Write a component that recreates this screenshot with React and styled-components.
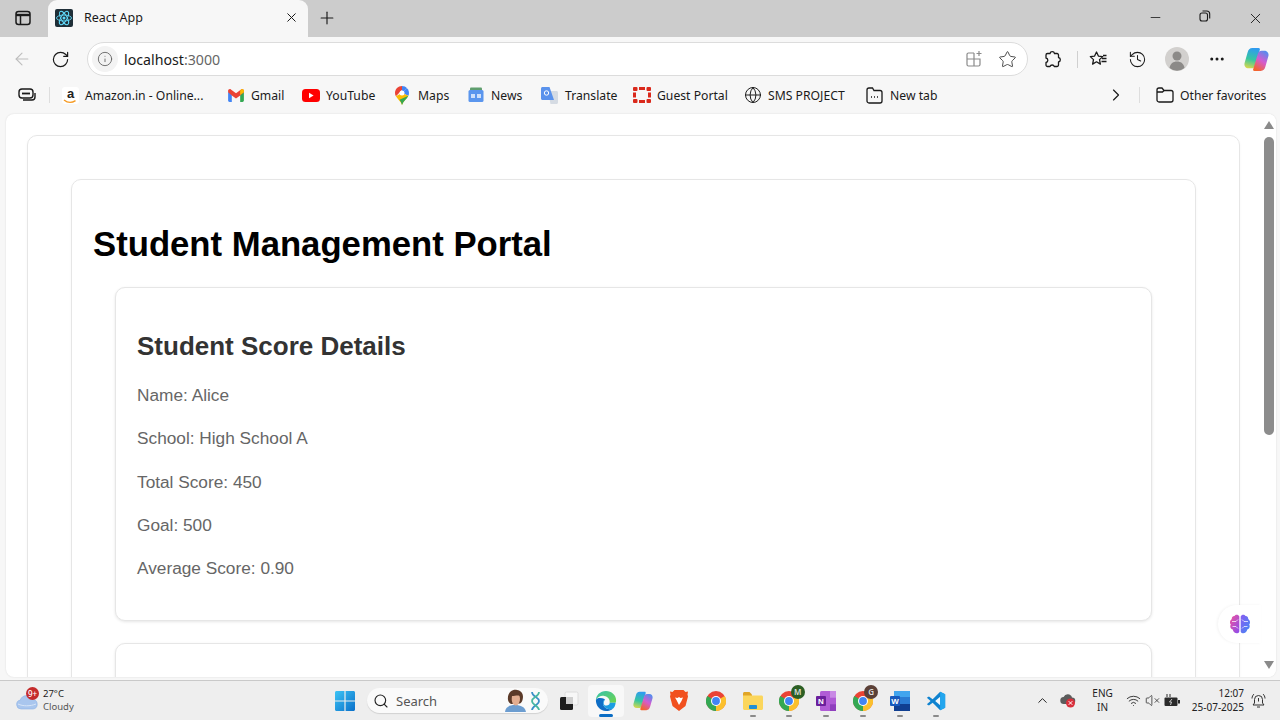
import React from "react"
import styled, { createGlobalStyle } from "styled-components"
import {
  ArrowLeft, RotateCw, Info, X, Plus, Minus, Star, History, MoreHorizontal,
  ChevronRight, ChevronUp, Search, Wifi, VolumeX, Globe,
} from "lucide-react"

const UI_FONT = `"Noto Sans", "Open Sans", sans-serif`

const GlobalStyle = createGlobalStyle`
  html, body { margin: 0; padding: 0; height: 720px; overflow: hidden; background: #f7f7f7; }
  * { box-sizing: border-box; }
`

/* ---------- drawn icons ---------- */

const ReactFav = () => (
  <svg width="18" height="18" viewBox="0 0 18 18">
    <rect width="18" height="18" rx="2" fill="#1f2f38" />
    <g fill="none" stroke="#61dafb" strokeWidth="0.9">
      <ellipse cx="9" cy="9" rx="7.5" ry="3" />
      <ellipse cx="9" cy="9" rx="7.5" ry="3" transform="rotate(60 9 9)" />
      <ellipse cx="9" cy="9" rx="7.5" ry="3" transform="rotate(120 9 9)" />
    </g>
    <circle cx="9" cy="9" r="1.5" fill="#61dafb" />
  </svg>
)

const SidebarIcon = () => (
  <svg width="16" height="16" viewBox="0 0 16 16" fill="none" stroke="#1a1a1a" strokeWidth="1.5">
    <rect x="1" y="1.5" width="14" height="13" rx="2.5" />
    <path d="M1 5h14" strokeWidth="2.4" />
    <path d="M5.5 5v9" />
  </svg>
)

const RestoreIcon = () => (
  <svg width="12" height="12" viewBox="0 0 12 12" fill="none" stroke="#1a1a1a" strokeWidth="1.1">
    <rect x="1" y="3" width="7.5" height="8" rx="2" />
    <path d="M3.5 1h4.2A3 3 0 0 1 10.7 4v4.5" />
  </svg>
)

const SplitIcon = () => (
  <svg width="18" height="18" viewBox="0 0 18 18" fill="none" stroke="#8a8a8a" strokeWidth="1.2">
    <path d="M9 3H3.5A1.5 1.5 0 0 0 2 4.5v10A1.5 1.5 0 0 0 3.5 16h10a1.5 1.5 0 0 0 1.5-1.5V9H2M9 3v13" />
    <path d="M14 1v5M11.5 3.5h5" />
  </svg>
)

const ExtensionIcon = () => (
  <svg width="19" height="19" viewBox="0 0 19 19" fill="none" stroke="#1a1a1a" strokeWidth="1.3" strokeLinejoin="round">
    <path d="M7 3.5a2.3 2.3 0 0 1 4.5 0H14A1.5 1.5 0 0 1 15.5 5v2.5a2.3 2.3 0 0 1 0 4.5V15a1.5 1.5 0 0 1-1.5 1.5h-2.700a2.300 2.300 0 0 0-4.300 0H4.500A1.500 1.500 0 0 1 3 15v-2.500a2.300 2.300 0 0 0 0-4.500V5a1.500 1.500 0 0 1 1.500-1.500z" />
  </svg>
)

const FavListIcon = () => (
  <svg width="20" height="20" viewBox="0 0 20 20" fill="none" stroke="#1a1a1a" strokeWidth="1.3" strokeLinejoin="round">
    <path d="M8.5 3l1.9 4.1 4.3.5-3.2 3 .9 4.500-3.900-2.300-3.900 2.300.9-4.500-3.200-3 4.300-.5z" />
    <path d="M14 9.500h4.500M13.500 12.500h5M15 6.500h3.500" />
  </svg>
)

const Avatar = () => (
  <svg width="24" height="24" viewBox="0 0 24 24">
    <circle cx="12" cy="12" r="12" fill="#d2d0ce" />
    <circle cx="12" cy="9" r="4.5" fill="#8c8a88" />
    <path d="M4.500 21c.8-4.500 3.700-6.500 7.500-6.500s6.700 2 7.500 6.500A12 12 0 0 1 4.500 21z" fill="#8c8a88" />
  </svg>
)

const CopilotIcon = ({ id, size }) => (
  <svg width={size} height={size} viewBox="0 0 24 24">
    <defs>
      <linearGradient id={`${id}a`} x1="0.5" y1="0" x2="0.3" y2="1">
        <stop offset="0" stopColor="#2f9bf0" />
        <stop offset="0.55" stopColor="#35c7a0" />
        <stop offset="1" stopColor="#d8d84c" />
      </linearGradient>
      <linearGradient id={`${id}b`} x1="0.8" y1="0" x2="0.3" y2="1">
        <stop offset="0" stopColor="#4c8ff0" />
        <stop offset="0.5" stopColor="#d45bd0" />
        <stop offset="1" stopColor="#f3642c" />
      </linearGradient>
    </defs>
    <path d="M8 1h6c1 0 1.500.8 1.200 1.700L10.500 18c-.5 1.500-1.500 2.500-3.300 2.500H4.500c-3 0-4.500-2.500-4-5L3.500 5C4.100 2.600 5.500 1 8 1z" fill={`url(#${id}a)`} />
    <path d="M16 23h-6c-1 0-1.500-.8-1.200-1.700L13.500 6c.5-1.500 1.500-2.500 3.300-2.500h2.700c3 0 4.500 2.500 4 5L20.500 19c-.6 2.400-2 4-4.500 4z" fill={`url(#${id}b)`} />
  </svg>
)

const AmazonIcon = () => (
  <AmazonBox>
    <span>a</span>
    <svg width="14" height="5" viewBox="0 0 14 5" fill="none" stroke="#f59a23" strokeWidth="1.4">
      <path d="M1 1c3.500 2.800 8 2.800 11.500.6" />
    </svg>
  </AmazonBox>
)

const GmailIcon = () => (
  <svg width="16" height="13" viewBox="0 0 17 14">
    <path d="M0 3v9.500c0 .8.700 1.500 1.500 1.500H4V6z" fill="#4285f4" />
    <path d="M17 3v9.500c0 .8-.7 1.500-1.500 1.500H13V6z" fill="#34a853" />
    <path d="M4 7L0 3.500V2C0 .3 2-.5 3 .5l5.500 4.200L14 .5c1-1 3-.2 3 1.500v1.500L13 7 8.500 10.300z" fill="#ea4335" />
    <path d="M13 1.500l1-1c1-1 3-.2 3 1.500v1.500L13 6.500z" fill="#fbbc04" />
  </svg>
)

const YoutubeIcon = () => (
  <svg width="18" height="13" viewBox="0 0 18 13">
    <rect width="18" height="13" rx="3.5" fill="#f00" />
    <path d="M7 3.800v5.400l4.600-2.700z" fill="#fff" />
  </svg>
)

const MapsIcon = () => (
  <svg width="14" height="19" viewBox="0 0 14 19">
    <path d="M7 0C3 0 0 3 0 7c0 1.300.3 2.300.9 3.300L7 4z" fill="#ea4335" />
    <path d="M7 0c2 0 3.800.8 5 2.200L7 7z" fill="#4285f4" />
    <path d="M12 2.200C13.300 3.400 14 5.100 14 7c0 1-.2 1.900-.6 2.700L7 7z" fill="#4285f4" />
    <path d="M.9 10.300L7 7l6.400 2.700C12 12.800 8.300 15 7 19c-1-3.500-4.500-5.800-6.100-8.700z" fill="#fbbc04" />
    <path d="M4.500 13.800L13.400 9.700C12 12.800 8.300 15 7 19c-.5-2-1.300-3.600-2.500-5.200z" fill="#34a853" />
    <circle cx="7" cy="7" r="2.5" fill="#fff" />
  </svg>
)

const NewsIcon = () => (
  <svg width="16" height="16" viewBox="0 0 16 16">
    <rect x="2" y="0.5" width="12" height="5" rx="1" fill="#5f9e6e" />
    <rect x="0.5" y="3" width="15" height="12" rx="1.5" fill="#5b96ee" />
    <rect x="3" y="7" width="4" height="4" fill="#cfe0fa" />
    <rect x="9" y="7" width="4" height="4" fill="#cfe0fa" />
  </svg>
)

const TranslateIcon = () => (
  <svg width="17" height="17" viewBox="0 0 17 17">
    <path d="M7 4h8.500c.8 0 1.500.7 1.500 1.500v10c0 .8-.7 1.500-1.500 1.500H9.500z" fill="#d5dbe3" />
    <path d="M1.500 0h7L13 13H1.500C.7 13 0 12.300 0 11.500v-10C0 .7.700 0 1.500 0z" fill="#5a92ec" />
    <circle cx="5.5" cy="6" r="2.2" fill="none" stroke="#fff" strokeWidth="1" />
  </svg>
)

const PortalIcon = () => (
  <svg width="18" height="16" viewBox="0 0 18 16" fill="#da291c">
    <rect x="0" y="0" width="4.5" height="4" rx="1" />
    <rect x="6" y="0" width="6" height="3" />
    <rect x="13.5" y="0" width="4.5" height="4" rx="1" />
    <rect x="0" y="5.5" width="3" height="5" />
    <rect x="15" y="5.5" width="3" height="5" />
    <rect x="0" y="12" width="4.5" height="4" rx="1" />
    <rect x="6" y="13" width="6" height="3" />
    <rect x="13.5" y="12" width="4.5" height="4" rx="1" />
  </svg>
)

const TabPageIcon = () => (
  <svg width="17" height="17" viewBox="0 0 17 17" fill="none" stroke="#1a1a1a" strokeWidth="1.3">
    <path d="M3 1h3.500l1.500 2.500h6a2 2 0 0 1 2 2V14a2 2 0 0 1-2 2H3a2 2 0 0 1-2-2V3a2 2 0 0 1 2-2z" />
    <path d="M5 10h1M8 10h1M11 10h1" strokeWidth="1.6" />
  </svg>
)

const FolderIcon = () => (
  <svg width="18" height="16" viewBox="0 0 18 16" fill="none" stroke="#1a1a1a" strokeWidth="1.3">
    <path d="M1 3a2 2 0 0 1 2-2h3l2 2.500h7a2 2 0 0 1 2 2V13a2 2 0 0 1-2 2H3a2 2 0 0 1-2-2z" />
    <path d="M1 5h5.500L8 3.500" />
  </svg>
)

const BrainIcon = () => (
  <svg width="22" height="20" viewBox="0 0 22 20">
    <defs>
      <linearGradient id="brainLeft" x1="0" y1="0" x2="1" y2="1">
        <stop offset="0" stopColor="#f2559a" />
        <stop offset="1" stopColor="#8a4cf0" />
      </linearGradient>
      <linearGradient id="brainRight" x1="0" y1="0" x2="1" y2="1">
        <stop offset="0" stopColor="#8a5cf0" />
        <stop offset="1" stopColor="#3f8bf5" />
      </linearGradient>
    </defs>
    <path d="M10.300 2.500C9.500.5 6.500.3 5.500 2 3.500 2 2.500 3.500 2.800 5 .8 6.200.3 9 1.800 10.500.6 12.500 1.500 15 3.800 15.500 4 18 7 20 9 19c1-.4 1.300-1 1.300-2z" fill="url(#brainLeft)" />
    <path d="M11.700 2.500C12.500.5 15.500.3 16.500 2c2 0 3 1.500 2.700 3 2 1.200 2.500 4 1 5.500 1.200 2 .3 4.500-2 5C18 18 15 20 13 19c-1-.4-1.300-1-1.300-2z" fill="url(#brainRight)" />
    <path d="M3 7.500h4l2-2M3.500 12.500H7l2 2M19 7.500h-4l-2-2M18.500 12.500H15l-2 2" fill="none" stroke="#fff" strokeWidth="0.9" opacity="0.8" />
  </svg>
)

const WeatherIcon = () => (
  <svg width="22" height="18" viewBox="0 0 22 18">
    <path d="M5 17a4.500 4.500 0 0 1-.8-8.900A7 7 0 0 1 17 7.500a4.800 4.800 0 0 1 .2 9.500z" fill="#a9c6ee" stroke="#8fb3e6" strokeWidth="0.6" />
    <path d="M2 12c5 2.400 12 2.400 18 0" fill="none" stroke="#d7e5f8" strokeWidth="1" />
  </svg>
)

const WindowsLogo = () => (
  <svg width="20" height="20" viewBox="0 0 20 20">
    <defs>
      <linearGradient id="winGrad" x1="0" y1="0" x2="1" y2="1">
        <stop offset="0" stopColor="#3cc4f5" />
        <stop offset="1" stopColor="#0a6fc9" />
      </linearGradient>
    </defs>
    <path d="M0 1.500C0 .7.700 0 1.500 0h7.900v9.400H0zM10.600 0h7.900c.8 0 1.500.7 1.500 1.500v7.900h-9.400zM0 10.600h9.400V20H1.500C.7 20 0 19.300 0 18.500zM10.600 10.600H20v7.900c0 .8-.7 1.500-1.500 1.500h-7.900z" fill="url(#winGrad)" />
  </svg>
)

const SearchFace = () => (
  <svg width="23" height="23" viewBox="0 0 23 23">
    <path d="M1 23c.5-5 4-7 10-7s10 2 11 7z" fill="#6c9dd0" />
    <path d="M4 11C3 4 8 0 13 1c5 .5 7 5 5.500 10-.5 2-1.500 3-2.500 3.500L7 15c-1.500-1-2.500-2-3-4z" fill="#5b3a29" />
    <path d="M8 7c3 0 6-1 7.500 0 1 3 .5 6-1.500 8.500-1.500 1.500-4 1-5-.5C7.500 12.500 7.500 10 8 7z" fill="#e2ad90" />
  </svg>
)

const DnaIcon = () => (
  <svg width="11" height="20" viewBox="0 0 11 20" fill="none" strokeWidth="1.7">
    <path d="M2 1c0 5 7 5 7 9s-7 5-7 9" stroke="#3a8fc8" />
    <path d="M9 1c0 5-7 5-7 9s7 5 7 9" stroke="#49b7a0" />
  </svg>
)

const TaskViewIcon = () => (
  <svg width="20" height="20" viewBox="0 0 20 20">
    <rect x="6" y="1" width="13" height="13" rx="1.5" fill="#f7f7f7" stroke="#dcdcdc" />
    <rect x="1" y="6" width="13" height="13" rx="1.5" fill="#1e1e1e" />
    <rect x="7" y="6" width="7" height="7" fill="#cfcfcf" />
  </svg>
)

const EdgeIcon = () => (
  <svg width="22" height="22" viewBox="0 0 24 24">
    <defs>
      <linearGradient id="edgeTop" x1="0" y1="0" x2="1" y2="1">
        <stop offset="0" stopColor="#35c1b0" />
        <stop offset="1" stopColor="#6fd54a" />
      </linearGradient>
    </defs>
    <path d="M12 1C5.500 1 1 6 1 11c2-4 6-5 9-4.500 4 .7 6.500 3.500 6 7.500h6.500c.5-1 .5-2 .5-3C23 5.500 18 1 12 1z" fill="url(#edgeTop)" />
    <path d="M1 11c-.3 6 4.500 12 11 12 3 0 5.500-1 7.500-2.500-3.500 1-7.500.5-9.500-2.500-2-3-1-6.500 1-8-4-1.500-8.500-2-10 1z" fill="#0f6ec6" />
    <path d="M11 10c-2.500 1.500-3 5-1 8 2 3 6 3.500 9.500 2.500 1.500-1.500 2.700-3 3-6.500H16c.2 2-1.500 3-3.500 3-2.500 0-3.500-2-3-3.500.3-1.300 1-2.500 1.500-3.500z" fill="#1b9de2" />
  </svg>
)

const BraveIcon = () => (
  <svg width="18" height="21" viewBox="0 0 18 21">
    <path d="M4.500 0h9l2 2 2.500-.5-.5 3L18 6.500 15.500 16 9 21 2.500 16 0 6.500l.5-2L0 1.500 2.500 2z" fill="#f1501f" />
    <path d="M5 7.500l2.500.5L9 7l1.500 1 2.500-.5-1.500 3.500L9 15l-2.500-5z" fill="#fff" />
  </svg>
)

const ChromeIcon = () => (
  <svg width="20" height="20" viewBox="0 0 24 24">
    <circle cx="12" cy="12" r="12" fill="#ea4335" />
    <path d="M12 12L22.400 6A12 12 0 0 1 12 24z" fill="#fbc02d" />
    <path d="M12 12L12 24A12 12 0 0 1 1.600 6z" fill="#34a853" />
    <circle cx="12" cy="12" r="6" fill="#fff" />
    <circle cx="12" cy="12" r="4.7" fill="#4285f4" />
  </svg>
)

const FilesIcon = () => (
  <svg width="20" height="18" viewBox="0 0 20 18">
    <path d="M0 1.500C0 .7.700 0 1.500 0h5L9 2.500V5H0z" fill="#e0a526" />
    <path d="M0 3.500h18.500c.8 0 1.500.7 1.500 1.500v11.500c0 .8-.7 1.500-1.500 1.500h-17C.7 18 0 17.300 0 16.500z" fill="#fbd65c" />
    <rect x="6" y="13" width="8" height="4" rx="0.8" fill="#1f8fd6" />
  </svg>
)

const OneNoteIcon = () => (
  <svg width="20" height="20" viewBox="0 0 20 20">
    <rect x="4" y="0" width="16" height="20" rx="1.5" fill="#b05cd6" />
    <rect x="14" y="0" width="6" height="6.7" fill="#c98ae5" />
    <rect x="14" y="13.3" width="6" height="6.7" fill="#8f3fbd" />
    <rect x="0" y="5" width="10" height="10" rx="1" fill="#6b1f9c" />
    <Letter x="5" y="13" fontSize="8">N</Letter>
  </svg>
)

const WordIcon = () => (
  <svg width="20" height="20" viewBox="0 0 20 20">
    <rect x="4" y="0" width="16" height="6" fill="#41a5ee" />
    <rect x="4" y="6" width="16" height="7" fill="#2b7cd3" />
    <rect x="4" y="13" width="16" height="7" fill="#103f91" />
    <rect x="0" y="5" width="10" height="10" rx="1" fill="#185abd" />
    <Letter x="5" y="13" fontSize="8">W</Letter>
  </svg>
)

const VsCodeIcon = () => (
  <svg width="20" height="20" viewBox="0 0 24 24">
    <path d="M17 1L8 10 3.500 6.500 1 8l4.500 4L1 16l2.500 1.500L8 14l9 9 6-3V4z" fill="#0f83d0" />
    <path d="M17 7l-6 5 6 5z" fill="#fff" opacity="0.95" />
    <path d="M17 1l6 3v16l-6 3z" fill="#23a6ee" />
  </svg>
)

const TrayCloud = () => (
  <svg width="16" height="15" viewBox="0 0 16 15">
    <path d="M4 11a3.500 3.500 0 0 1-.4-7A4.500 4.500 0 0 1 12 4.500 3 3 0 0 1 12 11z" fill="#5c5c5c" />
    <circle cx="10.5" cy="10" r="4.5" fill="#d9303c" />
    <path d="M8.700 8.200l3.600 3.600M12.300 8.200l-3.600 3.600" stroke="#fff" strokeWidth="1" />
  </svg>
)

const BatteryIcon = () => (
  <svg width="16" height="14" viewBox="0 0 16 14">
    <rect x="0.5" y="3.5" width="13" height="8.5" rx="1" fill="#2a2a2a" />
    <rect x="14" y="6" width="2" height="3.5" fill="#2a2a2a" />
    <path d="M3 0v3M6 0v3" stroke="#2a2a2a" strokeWidth="1" />
    <path d="M8 5L5.500 8h2L6.500 11" stroke="#eee" strokeWidth="0.8" fill="none" />
  </svg>
)

const BellIcon = () => (
  <svg width="15" height="16" viewBox="0 0 15 16" fill="none" stroke="#333" strokeWidth="1">
    <path d="M7.500 2.500a4 4 0 0 1 4 4V10l1.500 2H2l1.500-2V6.500a4 4 0 0 1 4-4zM6 14h3" />
    <path d="M1 5.500C1 3.500 2 2 3 1M14 5.500c0-2-1-3.500-2-4.500" />
    <path d="M7.500 5v3.500" />
  </svg>
)

/* ---------- data ---------- */

const bookmarks = [
  { label: "Amazon.in - Online...", icon: <AmazonIcon />, width: 166, gap: 6 },
  { label: "Gmail", icon: <GmailIcon />, width: 74, gap: 7 },
  { label: "YouTube", icon: <YoutubeIcon />, width: 93, gap: 6 },
  { label: "Maps", icon: <MapsIcon />, width: 73, gap: 9 },
  { label: "News", icon: <NewsIcon />, width: 73, gap: 7 },
  { label: "Translate", icon: <TranslateIcon />, width: 92, gap: 7 },
  { label: "Guest Portal", icon: <PortalIcon />, width: 111, gap: 6 },
  { label: "SMS PROJECT", icon: <Globe size={18} strokeWidth={1.3} color="#1a1a1a" />, width: 122, gap: 6 },
  { label: "New tab", icon: <TabPageIcon />, width: 100, gap: 7 },
]

const details = [
  "Name: Alice",
  "School: High School A",
  "Total Score: 450",
  "Goal: 500",
  "Average Score: 0.90",
]

const taskbarApps = [
  { key: "taskview", icon: <TaskViewIcon /> },
  { key: "edge", icon: <EdgeIcon />, active: true },
  { key: "copilot", icon: <CopilotIcon id="taskCopilot" size={20} /> },
  { key: "brave", icon: <BraveIcon /> },
  { key: "chrome", icon: <ChromeIcon /> },
  { key: "files", icon: <FilesIcon />, open: true },
  { key: "chromeM", icon: <ChromeIcon />, open: true, badge: "M", badgeColor: "#2c5f24" },
  { key: "onenote", icon: <OneNoteIcon />, open: true },
  { key: "chromeG", icon: <ChromeIcon />, open: true, badge: "G", badgeColor: "#5b4037" },
  { key: "word", icon: <WordIcon />, open: true },
  { key: "vscode", icon: <VsCodeIcon />, open: true },
]

/* ---------- page ---------- */

export default function App() {
  return (
    <Screen>
      <GlobalStyle />

      <TabStrip>
        <SideButton><SidebarIcon /></SideButton>
        <Tab>
          <ReactFav />
          <TabTitle>React App</TabTitle>
          <X size={15} strokeWidth={1.6} color="#1a1a1a" />
        </Tab>
        <NewTabButton><Plus size={20} strokeWidth={1.4} color="#1a1a1a" /></NewTabButton>
        <WindowControls>
          <WindowButton><Minus size={15} strokeWidth={1.3} color="#1a1a1a" /></WindowButton>
          <WindowButton><RestoreIcon /></WindowButton>
          <WindowButton><X size={17} strokeWidth={1.3} color="#1a1a1a" /></WindowButton>
        </WindowControls>
      </TabStrip>

      <Toolbar>
        <NavButton><ArrowLeft size={20} strokeWidth={1.3} color="#bdbdbd" /></NavButton>
        <NavButton><RotateCw size={19} strokeWidth={1.5} color="#1a1a1a" /></NavButton>
        <AddressBar>
          <SiteInfo><Info size={16} strokeWidth={1.3} color="#5f5f5f" /></SiteInfo>
          <Url>localhost<UrlPort>:3000</UrlPort></Url>
          <AddressActions>
            <SplitIcon />
            <Star size={19} strokeWidth={1.2} color="#444" />
          </AddressActions>
        </AddressBar>
        <ToolIcons>
          <ToolSlot><ExtensionIcon /></ToolSlot>
          <ToolDivider />
          <ToolSlot><FavListIcon /></ToolSlot>
          <ToolSlot><History size={19} strokeWidth={1.3} color="#1a1a1a" /></ToolSlot>
          <ToolSlot><Avatar /></ToolSlot>
          <ToolSlot><MoreHorizontal size={18} strokeWidth={2} color="#1a1a1a" /></ToolSlot>
          <ToolSlot><CopilotIcon id="barCopilot" size={25} /></ToolSlot>
        </ToolIcons>
      </Toolbar>

      <BookmarkBar>
        <BookmarkToggle>
          <svg width="18" height="14" viewBox="0 0 18 14" fill="none" stroke="#1a1a1a" strokeWidth="1.4">
            <rect x="1" y="1" width="14" height="9" rx="3" />
            <path d="M4 5.500h8" strokeWidth="1.8" />
            <path d="M17 5v4a3 3 0 0 1-3 3H5" />
          </svg>
        </BookmarkToggle>
        <BookmarkDivider />
        <BookmarkList>
          {bookmarks.map((b) => (
            <Bookmark key={b.label} $width={b.width} $gap={b.gap}>
              <BookmarkIcon>{b.icon}</BookmarkIcon>
              {b.label}
            </Bookmark>
          ))}
        </BookmarkList>
        <BookmarkEnd>
          <ChevronRight size={20} strokeWidth={1.4} color="#1a1a1a" />
          <BookmarkDivider />
          <Bookmark $gap={6}><FolderIcon />Other favorites</Bookmark>
        </BookmarkEnd>
      </BookmarkBar>

      <Viewport>
        <PageArea>
          <OuterCard>
            <AppCard>
              <Title>Student Management Portal</Title>
              <ScoreCard>
                <ScoreTitle>Student Score Details</ScoreTitle>
                {details.map((d) => <Detail key={d}>{d}</Detail>)}
              </ScoreCard>
              <ScoreCard />
            </AppCard>
          </OuterCard>
        </PageArea>
        <Scrollbar>
          <ScrollArrow $up />
          <ScrollThumb />
          <ScrollArrow />
        </Scrollbar>
        <FloatingButton><BrainIcon /></FloatingButton>
      </Viewport>

      <Taskbar>
        <Weather>
          <WeatherGlyph>
            <WeatherIcon />
            <WeatherBadge>9+</WeatherBadge>
          </WeatherGlyph>
          <WeatherText>
            <span>27°C</span>
            <WeatherSub>Cloudy</WeatherSub>
          </WeatherText>
        </Weather>
        <StartButton><WindowsLogo /></StartButton>
        <SearchPill>
          <Search size={16} strokeWidth={1.7} color="#222" />
          <SearchLabel>Search</SearchLabel>
          <SearchFace />
          <DnaIcon />
        </SearchPill>
        <AppRow>
          {taskbarApps.map((a) => (
            <AppSlot key={a.key} $active={a.active}>
              {a.icon}
              {a.badge && <AppBadge $bg={a.badgeColor}>{a.badge}</AppBadge>}
              {a.active && <ActiveBar />}
              {a.open && <OpenDot />}
            </AppSlot>
          ))}
        </AppRow>
        <Tray>
          <TrayChevron><ChevronUp size={15} strokeWidth={1.6} color="#222" /></TrayChevron>
          <TrayCloudSlot><TrayCloud /></TrayCloudSlot>
          <Lang><span>ENG</span><span>IN</span></Lang>
          <TrayGroup>
            <Wifi size={15} strokeWidth={1.4} color="#222" />
            <VolumeX size={15} strokeWidth={1.3} color="#333" />
            <BatteryIcon />
          </TrayGroup>
          <Clock><span>12:07</span><span>25-07-2025</span></Clock>
          <BellSlot><BellIcon /></BellSlot>
        </Tray>
      </Taskbar>
    </Screen>
  )
}

const Screen = styled.div`
  width: 1280px;
  height: 720px;
  display: flex;
  flex-direction: column;
  overflow: hidden;
  background: #f7f7f7;
  font-family: ${UI_FONT};
  color: #1a1a1a;
`

const TabStrip = styled.div`
  height: 37px;
  flex: none;
  display: flex;
  align-items: center;
  background: #cccccc;
`

const SideButton = styled.div`
  width: 48px;
  height: 37px;
  padding: 0 0 2px 15px;
  display: flex;
  align-items: center;
`

const Tab = styled.div`
  width: 260px;
  height: 37px;
  padding: 0 9px 2px 7px;
  display: flex;
  align-items: center;
  background: #f7f7f7;
  border-radius: 9px 9px 0 0;
`

const TabTitle = styled.span`
  flex: 1;
  margin-left: 11px;
  font-size: 12.5px;
`

const NewTabButton = styled.div`
  width: 38px;
  padding-bottom: 2px;
  display: flex;
  justify-content: center;
`

const WindowControls = styled.div`
  margin-left: auto;
  display: flex;
`

const WindowButton = styled.div`
  width: 50px;
  display: flex;
  justify-content: center;
`

const Toolbar = styled.div`
  height: 41px;
  flex: none;
  padding: 3px 0 0 2px;
  display: flex;
  align-items: center;
`

const NavButton = styled.div`
  width: 39px;
  display: flex;
  justify-content: center;
`

const AddressBar = styled.div`
  width: 941px;
  height: 34px;
  margin-left: 7px;
  padding: 0 10px 0 4px;
  display: flex;
  align-items: center;
  background: #fff;
  border: 1px solid #dcdcdc;
  border-radius: 17px;
`

const SiteInfo = styled.div`
  width: 26px;
  height: 26px;
  display: flex;
  align-items: center;
  justify-content: center;
  background: #f3f3f3;
  border-radius: 50%;
`

const Url = styled.span`
  margin-left: 6px;
  font-size: 14.2px;
`

const UrlPort = styled.span`
  color: #666;
`

const AddressActions = styled.div`
  margin-left: auto;
  display: flex;
  align-items: center;
  gap: 15px;
`

const ToolIcons = styled.div`
  margin-left: 5px;
  flex: 1;
  display: flex;
  align-items: center;
`

const ToolSlot = styled.div`
  width: 39.5px;
  flex: none;
  display: flex;
  justify-content: center;
`

const ToolDivider = styled.div`
  width: 1px;
  height: 17px;
  margin: 0 1px 0 4px;
  background: #d0d0d0;
`

const BookmarkBar = styled.div`
  height: 36px;
  flex: none;
  padding: 0 0 2px 18px;
  display: flex;
  align-items: center;
  font-size: 12.2px;
`

const BookmarkToggle = styled.div`
  width: 31px;
  display: flex;
`

const BookmarkDivider = styled.div`
  width: 1px;
  height: 16px;
  background: #dedede;
`

const BookmarkList = styled.div`
  margin-left: 12px;
  display: flex;
  align-items: center;
`

const Bookmark = styled.div`
  flex: none;
  width: ${(p) => (p.$width ? `${p.$width}px` : "auto")};
  display: flex;
  align-items: center;
  gap: ${(p) => p.$gap}px;
  white-space: nowrap;
`

const BookmarkIcon = styled.span`
  display: flex;
  align-items: center;
  justify-content: center;
`

const AmazonBox = styled.span`
  position: relative;
  width: 17px;
  height: 17px;
  display: block;
  background: #fff;
  border-radius: 3px;
  text-align: center;

  span {
    display: block;
    font: bold 13px/13px "Liberation Sans", sans-serif;
    color: #222;
  }

  svg {
    position: absolute;
    left: 1px;
    bottom: 0;
  }
`

const BookmarkEnd = styled.div`
  flex: 1;
  margin-left: 140px;
  display: flex;
  align-items: center;
  gap: 13px;

  ${Bookmark} {
    margin-left: 3px;
  }
`

const Viewport = styled.main`
  position: relative;
  width: 1270px;
  height: 563px;
  flex: none;
  margin-left: 6px;
  display: flex;
  overflow: hidden;
  background: #fff;
  border-radius: 8px;
  box-shadow: 0 0 2px rgba(0, 0, 0, 0.12);
`

const PageArea = styled.div`
  flex: 1;
  min-width: 0;
  padding: 21px 21px 0;
  overflow: hidden;
  font-family: "Liberation Sans", Arial, sans-serif;
`

const Card = styled.div`
  background: #fff;
  border: 1px solid #e6e6e6;
  border-radius: 10px;
  box-shadow: 0 1px 3px rgba(0, 0, 0, 0.04);
`

const OuterCard = styled(Card)`
  padding: 43px 43px 0;
`

const AppCard = styled(Card)`
  padding: 43px 0 0 21px;
`

const Title = styled.h1`
  margin: 0 0 22px;
  font-size: 34.7px;
  line-height: 42px;
  font-weight: 700;
  color: #000;
`

const ScoreCard = styled(Card)`
  min-height: 60px;
  margin: 0 43px 22px 22px;
  padding: 43px 21px 21px;
  box-shadow: 0 1px 3px rgba(0, 0, 0, 0.1);
`

const ScoreTitle = styled.h2`
  margin: 0 0 24px;
  font-size: 26px;
  line-height: 30px;
  font-weight: 700;
  color: #333;
`

const Detail = styled.p`
  margin: 0 0 22px;
  font-size: 17.25px;
  line-height: 21.3px;
  color: #666;

  &:last-child {
    margin-bottom: 20px;
  }
`

const Scrollbar = styled.div`
  width: 15px;
  flex: none;
  padding: 7px 0 8px;
  display: flex;
  flex-direction: column;
  align-items: center;
  background: #fff;
`

const ScrollArrow = styled.div`
  width: 0;
  height: 0;
  flex: none;
  border-left: 5px solid transparent;
  border-right: 5px solid transparent;
  border-bottom: ${(p) => (p.$up ? "8px solid #8a8a8a" : "none")};
  border-top: ${(p) => (p.$up ? "none" : "8px solid #8a8a8a")};
  margin-top: ${(p) => (p.$up ? "0" : "auto")};
`

const ScrollThumb = styled.div`
  width: 10px;
  height: 298px;
  margin-top: 8px;
  background: #8c8c8c;
  border-radius: 5px;
`

const FloatingButton = styled.div`
  position: absolute;
  top: 491px;
  right: 15px;
  width: 43px;
  height: 38px;
  display: flex;
  align-items: center;
  justify-content: center;
  background: #fff;
  border-radius: 19px 0 0 19px;
  box-shadow: -1px 0 3px rgba(0, 0, 0, 0.05);
`

const Taskbar = styled.footer`
  height: 40px;
  flex: none;
  margin-top: 3px;
  display: flex;
  align-items: center;
  background: #eeeeee;
  border-top: 1px solid #c9c9c9;
  font-family: "Noto Sans", sans-serif;
`

const Weather = styled.div`
  width: 335px;
  padding: 0 0 2px 16px;
  display: flex;
  align-items: center;
  gap: 5px;
`

const WeatherGlyph = styled.div`
  position: relative;
  display: flex;
  padding-top: 2px;
`

const WeatherBadge = styled.span`
  position: absolute;
  top: -3px;
  left: 10px;
  width: 13px;
  height: 13px;
  display: flex;
  align-items: center;
  justify-content: center;
  background: #c42b2b;
  border-radius: 50%;
  color: #fff;
  font-size: 8px;
  font-weight: 500;
`

const WeatherText = styled.div`
  display: flex;
  flex-direction: column;
  font-size: 9.5px;
  line-height: 13px;
`

const WeatherSub = styled.span`
  color: #555;
`

const StartButton = styled.div`
  width: 32px;
  display: flex;
`

const SearchPill = styled.div`
  width: 181px;
  height: 25px;
  padding: 0 7px 0 6px;
  display: flex;
  align-items: center;
  background: #fafafa;
  border-radius: 13px;
  box-shadow: 0 1px 1px rgba(0, 0, 0, 0.12);

  svg:last-child {
    margin-left: 3px;
  }
`

const SearchLabel = styled.span`
  flex: 1;
  margin-left: 7px;
  font-size: 13px;
  color: #555;
`

const AppRow = styled.div`
  margin-left: 3px;
  display: flex;
  align-items: center;
`

const AppSlot = styled.div`
  position: relative;
  width: 36.7px;
  height: 32px;
  display: flex;
  align-items: center;
  justify-content: center;
  background: ${(p) => (p.$active ? "#f8f8f8" : "transparent")};
  border-radius: 4px;
`

const AppBadge = styled.span`
  position: absolute;
  top: 0;
  right: 3px;
  width: 14px;
  height: 14px;
  display: flex;
  align-items: center;
  justify-content: center;
  background: ${(p) => p.$bg};
  border-radius: 50%;
  color: #ddd;
  font-size: 8px;
  font-weight: 600;
`

const ActiveBar = styled.span`
  position: absolute;
  left: 50%;
  bottom: 0;
  width: 14px;
  height: 3px;
  margin-left: -7px;
  background: #0a6cc4;
  border-radius: 2px;
`

const OpenDot = styled.span`
  position: absolute;
  left: 50%;
  bottom: 0;
  width: 6px;
  height: 2px;
  margin-left: -3px;
  background: #8a8a8a;
  border-radius: 1px;
`

const Letter = styled.text`
  fill: #fff;
  font-family: "Liberation Sans", sans-serif;
  font-weight: 700;
  text-anchor: middle;
`

const Tray = styled.div`
  flex: 1;
  display: flex;
  align-items: center;
  margin-left: 80px;
  font-size: 10px;
  line-height: 13.5px;
  color: #222;
`

const TrayChevron = styled.div`
  width: 25px;
  display: flex;
`

const TrayCloudSlot = styled.div`
  width: 24px;
  display: flex;
`

const Lang = styled.div`
  width: 38px;
  display: flex;
  flex-direction: column;
  align-items: center;
`

const TrayGroup = styled.div`
  margin-left: 4px;
  width: 56px;
  display: flex;
  align-items: center;
  gap: 4px;
`

const Clock = styled.div`
  flex: 1;
  display: flex;
  flex-direction: column;
  align-items: flex-end;
  white-space: nowrap;
`

const BellSlot = styled.div`
  width: 36px;
  padding-left: 7px;
  display: flex;
`
